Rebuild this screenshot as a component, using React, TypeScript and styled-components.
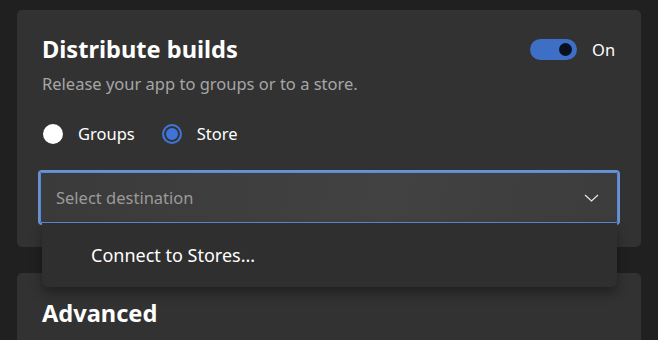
import styled, { createGlobalStyle } from "styled-components";

const Global = createGlobalStyle`
  html, body {
    margin: 0;
    padding: 0;
    background: #202020;
    font-family: "Segoe UI", "Noto Sans", "Open Sans", sans-serif;
    color: #ffffff;
  }
`;

export default function App() {
  return (
    <Page>
      <Global />
      <Card>
        <HeaderRow>
          <Title>Distribute builds</Title>
          <ToggleWrap>
            <Toggle $on>
              <Knob />
            </Toggle>
            <ToggleLabel>On</ToggleLabel>
          </ToggleWrap>
        </HeaderRow>
        <Subtitle>Release your app to groups or to a store.</Subtitle>
        <RadioGroup>
          <RadioItem>
            <Radio $checked={false} />
            <RadioLabel>Groups</RadioLabel>
          </RadioItem>
          <RadioItem>
            <Radio $checked />
            <RadioLabel>Store</RadioLabel>
          </RadioItem>
        </RadioGroup>
        <SelectWrap>
          <Select>
            <Placeholder>Select destination</Placeholder>
            <svg width="15" height="8" viewBox="0 0 15 8">
              <path d="M1 1 L7.5 7 L14 1" fill="none" stroke="#e8e8e8" strokeWidth="1.2" />
            </svg>
          </Select>
          <Menu>
            <MenuItem>Connect to Stores...</MenuItem>
          </Menu>
        </SelectWrap>
      </Card>
      <Card $top={25}>
        <Title>Advanced</Title>
      </Card>
    </Page>
  );
}

const Page = styled.main`
  height: 340px;
  overflow: hidden;
  padding: 10px 17px 0 17px;
  box-sizing: border-box;
  display: flex;
  flex-direction: column;
  gap: 26px;
`;

const Card = styled.section<{ $top?: number }>`
  background: #323232;
  border-radius: 5px;
  padding: ${(p) => p.$top ?? 24}px 24px 24px 25px;
  display: flex;
  flex-direction: column;
`;

const HeaderRow = styled.div`
  display: flex;
  align-items: center;
  justify-content: space-between;
`;

const Title = styled.h2`
  margin: 0;
  font-size: 23.6px;
  font-weight: 700;
  line-height: 30px;
  color: #ffffff;
`;

const ToggleWrap = styled.div`
  display: flex;
  align-items: center;
  gap: 15px;
`;

const Toggle = styled.div<{ $on?: boolean }>`
  width: 47px;
  height: 21px;
  border-radius: 11px;
  background: ${(p) => (p.$on ? "#3e6fc7" : "#555")};
  display: flex;
  align-items: center;
  justify-content: ${(p) => (p.$on ? "flex-end" : "flex-start")};
  padding: 0 5px;
  box-sizing: border-box;
`;

const Knob = styled.div`
  width: 13px;
  height: 13px;
  border-radius: 50%;
  background: #0b1020;
`;

const ToggleLabel = styled.span`
  font-size: 16.5px;
  color: #ffffff;
  margin-right: 1px;
  min-width: 24px;
`;

const Subtitle = styled.p`
  margin: 9px 0 0;
  font-size: 16.5px;
  line-height: 22px;
  color: #a6a6a6;
`;

const RadioGroup = styled.div`
  display: flex;
  gap: 27px;
  margin-top: 28px;
  margin-left: 1px;
`;

const RadioItem = styled.label`
  display: flex;
  align-items: center;
  gap: 15px;
`;

const Radio = styled.span<{ $checked: boolean }>`
  width: 20px;
  height: 20px;
  border-radius: 50%;
  box-sizing: border-box;
  background: ${(p) => (p.$checked ? "#3f75d6" : "#ffffff")};
  border: ${(p) => (p.$checked ? "2px solid #3f75d6" : "none")};
  box-shadow: ${(p) => (p.$checked ? "inset 0 0 0 2px #323232" : "none")};
`;

const RadioLabel = styled.span`
  font-size: 16.5px;
  line-height: 22px;
  color: #ffffff;
`;

const SelectWrap = styled.div`
  position: relative;
  margin-top: 27px;
  margin-left: -2px;
  margin-right: -1px;
`;

const Select = styled.div`
  height: 51px;
  box-sizing: border-box;
  border: 1px solid #5b8ad4;
  box-shadow: 0 0 0 2px #6993d0;
  border-radius: 2px;
  background: linear-gradient(100deg, #3a3a3a, #424242 60%, #3c3c3c);
  display: flex;
  align-items: center;
  justify-content: space-between;
  padding: 0 18px 0 15px;
`;

const Placeholder = styled.span`
  font-size: 16.5px;
  color: #9a9a9a;
`;

const Menu = styled.div`
  position: absolute;
  top: 51px;
  left: 2px;
  right: 1px;
  height: 64px;
  background: #2f2f2f;
  border-radius: 0 0 6px 6px;
  box-shadow: 0 6px 12px rgba(0, 0, 0, 0.35);
  display: flex;
  align-items: center;
  padding-left: 49px;
  z-index: 2;
`;

const MenuItem = styled.div`
  font-size: 18px;
  color: #ffffff;
`;
